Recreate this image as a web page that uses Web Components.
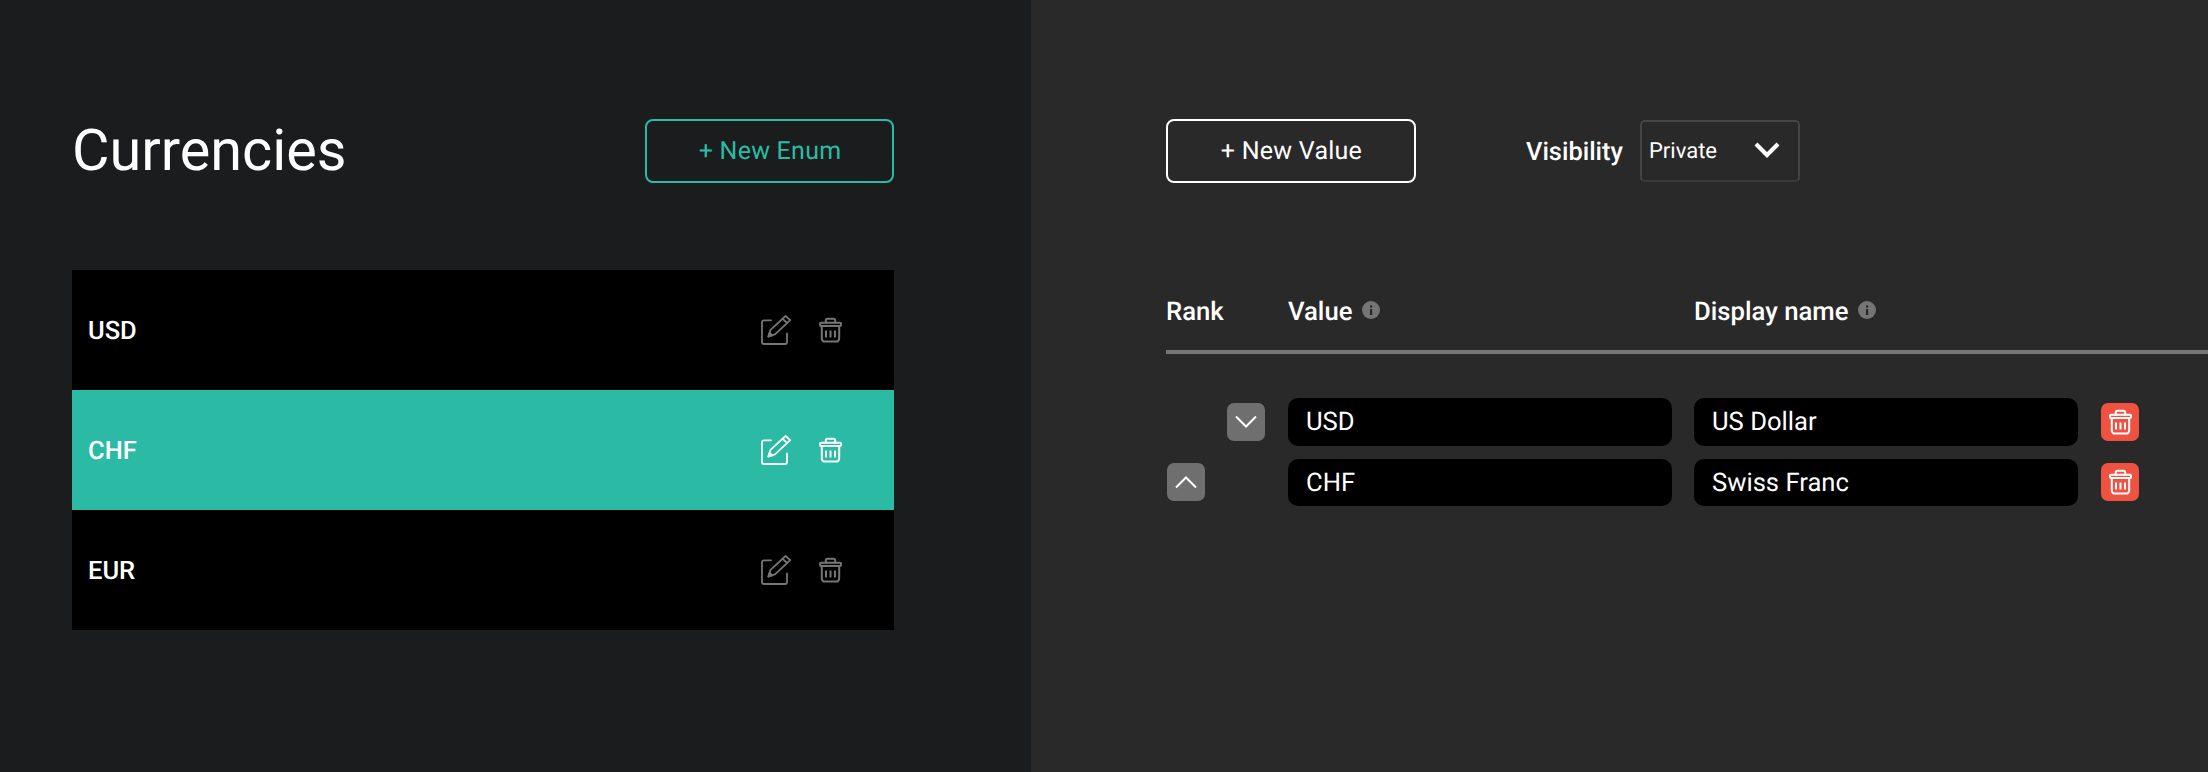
<!DOCTYPE html>
<html>
<head>
<meta charset="utf-8">
<title>Currencies</title>
<style>
  html, body { margin: 0; height: 100%; background: #292929; }
  body { font-family: Roboto, "Liberation Sans", sans-serif; color: #fff; overflow: hidden; text-rendering: geometricPrecision; }
</style>
</head>
<body>
<enum-page>
  <enum-list slot="left" title-text="Currencies">
    <enum-row name="USD"></enum-row>
    <enum-row name="CHF" selected></enum-row>
    <enum-row name="EUR"></enum-row>
  </enum-list>
  <value-editor slot="right">
    <value-row value="USD" display="US Dollar" down></value-row>
    <value-row value="CHF" display="Swiss Franc" up></value-row>
  </value-editor>
</enum-page>

<script>
const ICONS = {
  edit: `<svg width="32" height="32" viewBox="0 0 32 32" fill="none" stroke="currentColor" stroke-width="1.8" stroke-linejoin="round" stroke-linecap="round">
    <path d="M11 5.3H4a2 2 0 0 0-2 2V27a2 2 0 0 0 2 2h21a2 2 0 0 0 2-2v-8.5"/>
    <path d="M8.4 21.5l2.1-6.6L25.6 1l4.6 4.2L15 19.3z"/>
    <path d="M22.6 3.8l4.6 4.2"/>
    <path d="M8.4 21.5l1.2-3.8 2.7 2.6z" fill="currentColor"/>
  </svg>`,
  trash: `<svg width="25" height="28" viewBox="0 0 25 28" fill="none" stroke="currentColor" stroke-width="2" stroke-linejoin="round" stroke-linecap="round">
    <rect x="2" y="6.8" width="21" height="3.2" rx="1"/>
    <path d="M7.8 6.8V4.4a1.6 1.6 0 0 1 1.6-1.6h6.2a1.6 1.6 0 0 1 1.6 1.6v2.4"/>
    <path d="M3.8 10v12.6a3 3 0 0 0 3 3h11.4a3 3 0 0 0 3-3V10"/>
    <path d="M8 14.5v7M12.5 14.5v7M17 14.5v7" stroke-linecap="butt"/>
  </svg>`,
  up: `<svg width="24" height="14" viewBox="0 0 24 14" fill="none" stroke="currentColor" stroke-width="2"><path d="M2 12.5L12 2.5l10 10"/></svg>`,
  down: `<svg width="24" height="14" viewBox="0 0 24 14" fill="none" stroke="currentColor" stroke-width="2"><path d="M2 1.5l10 10 10-10"/></svg>`,
  caret: `<svg width="26" height="16" viewBox="0 0 26 16" fill="none" stroke="currentColor" stroke-width="4.2"><path d="M2 2l11 11L24 2"/></svg>`,
  info: `<svg width="18" height="18" viewBox="0 0 18 18"><circle cx="9" cy="9" r="9" fill="#757575"/><rect x="8" y="8" width="2.2" height="6" fill="#292929"/><rect x="8" y="4.4" width="2.2" height="2.2" fill="#292929"/></svg>`
};

class EnumPage extends HTMLElement {
  constructor() {
    super();
    this.attachShadow({ mode: "open" }).innerHTML = `
      <style>
        :host { display: grid; grid-template-columns: 1031px 1fr; height: 772px; }
        .left { background: #1b1c1e; }
        .right { background: #292929; }
      </style>
      <div class="left"><slot name="left"></slot></div>
      <div class="right"><slot name="right"></slot></div>`;
  }
}

class OutlineButton extends HTMLElement {
  constructor() {
    super();
    this.attachShadow({ mode: "open" }).innerHTML = `
      <style>
        :host {
          display: flex; align-items: center; justify-content: center;
          box-sizing: border-box; width: 249px; height: 64px; padding: 1px 0 0 1px;
          border: 2px solid currentColor; border-radius: 8px;
          font-size: 25px; letter-spacing: .25px;
        }
      </style>
      <slot></slot>`;
  }
}

class EnumList extends HTMLElement {
  constructor() {
    super();
    this.attachShadow({ mode: "open" }).innerHTML = `
      <style>
        :host { display: block; box-sizing: border-box; width: 966px; padding: 119px 72px 0; }
        header { display: flex; justify-content: space-between; align-items: center; height: 64px; margin-bottom: 87px; }
        h1 { margin: 0; font-size: 57.6px; font-weight: 400; color: #fff; }
        outline-button { color: #2bbba5; }
      </style>
      <header>
        <h1></h1>
        <outline-button>+ New Enum</outline-button>
      </header>
      <slot></slot>`;
    this.shadowRoot.querySelector("h1").textContent = this.getAttribute("title-text");
  }
}

class EnumRow extends HTMLElement {
  constructor() {
    super();
    this.attachShadow({ mode: "open" }).innerHTML = `
      <style>
        :host {
          display: flex; align-items: center; height: 120px; padding: 0 46px 0 16px;
          background: #000; color: #fff;
          font-size: 25.5px; font-weight: 500;
        }
        :host([selected]) { background: #2bbba5; }
        .name { flex: 1; padding-top: 1px; }
        .icons { display: flex; align-items: center; gap: 26px; margin-right: 5px; color: #757575; }
        :host([selected]) .icons { color: #fff; }
        svg { display: block; }
        svg:first-child { margin-top: 2px; }
      </style>
      <span class="name"></span>
      <span class="icons">${ICONS.edit}${ICONS.trash}</span>`;
    this.shadowRoot.querySelector(".name").textContent = this.getAttribute("name");
  }
}

class VisibilitySelect extends HTMLElement {
  constructor() {
    super();
    this.attachShadow({ mode: "open" }).innerHTML = `
      <style>
        :host {
          display: flex; align-items: center; justify-content: space-between;
          box-sizing: border-box; width: 160px; height: 62px; padding: 0 18px 0 7px;
          border: 2px solid #454545; border-bottom-color: #3a3a3a; border-radius: 5px;
          font-size: 22px;
        }
        svg { display: block; margin-bottom: 2px; }
      </style>
      <span>Private</span>${ICONS.caret}`;
  }
}

class HeaderCell extends HTMLElement {
  constructor() {
    super();
    const info = this.hasAttribute("info") ? ICONS.info : "";
    this.attachShadow({ mode: "open" }).innerHTML = `
      <style>
        :host { display: flex; align-items: center; gap: 10px; padding-top: 1px; font-size: 25.7px; font-weight: 500; }
        svg { display: block; margin-top: -4px; }
      </style>
      <slot></slot>${info}`;
  }
}

class ValueEditor extends HTMLElement {
  constructor() {
    super();
    this.attachShadow({ mode: "open" }).innerHTML = `
      <style>
        :host { display: block; padding: 119px 0 0 135px; }
        .tools { display: flex; align-items: center; height: 64px; }
        .tools outline-button { width: 250px; }
        .label { margin-left: 110px; margin-right: 17px; padding-top: 1px; font-size: 25.4px; font-weight: 500; }
        .head {
          display: grid; grid-template-columns: 122px 406px 1fr; align-items: center;
          height: 46px; padding-bottom: 16px; margin-top: 105px;
          border-bottom: 4px solid #757575;
        }
        .rows { display: flex; flex-direction: column; gap: 13px; margin-top: 44px; }
      </style>
      <div class="tools">
        <outline-button>+ New Value</outline-button>
        <span class="label">Visibility</span>
        <visibility-select></visibility-select>
      </div>
      <div class="head">
        <header-cell>Rank</header-cell>
        <header-cell info>Value</header-cell>
        <header-cell info>Display name</header-cell>
      </div>
      <div class="rows"><slot></slot></div>`;
  }
}

class ValueRow extends HTMLElement {
  constructor() {
    super();
    const up = this.hasAttribute("up") ? `<span class="btn">${ICONS.up}</span>` : `<span></span>`;
    const down = this.hasAttribute("down") ? `<span class="btn">${ICONS.down}</span>` : `<span></span>`;
    this.attachShadow({ mode: "open" }).innerHTML = `
      <style>
        :host {
          display: grid; grid-template-columns: 39px 39px 384px 384px 39px;
          column-gap: 22px; align-items: center; height: 47.5px; font-size: 25.6px; color: #fff;
        }
        .btn {
          display: flex; align-items: center; justify-content: center;
          width: 38px; height: 38px; border-radius: 7px; background: #6f6f6f;
        }
        .del { background: #f05241; margin-left: 1px; }
        .field {
          display: flex; align-items: center; box-sizing: border-box; height: 100%;
          padding: 1px 0 0 18px; border-radius: 10px; background: #000;
        }
        .rank { display: contents; }
        .rank span:first-child { margin-left: 1px; }
      </style>
      <div class="rank">${up}${down}</div>
      <div class="field value"></div>
      <div class="field display"></div>
      <span class="btn del">${ICONS.trash}</span>`;
    this.shadowRoot.querySelector(".value").textContent = this.getAttribute("value");
    this.shadowRoot.querySelector(".display").textContent = this.getAttribute("display");
  }
}

customElements.define("enum-page", EnumPage);
customElements.define("outline-button", OutlineButton);
customElements.define("enum-list", EnumList);
customElements.define("enum-row", EnumRow);
customElements.define("visibility-select", VisibilitySelect);
customElements.define("header-cell", HeaderCell);
customElements.define("value-editor", ValueEditor);
customElements.define("value-row", ValueRow);
</script>
</body>
</html>
